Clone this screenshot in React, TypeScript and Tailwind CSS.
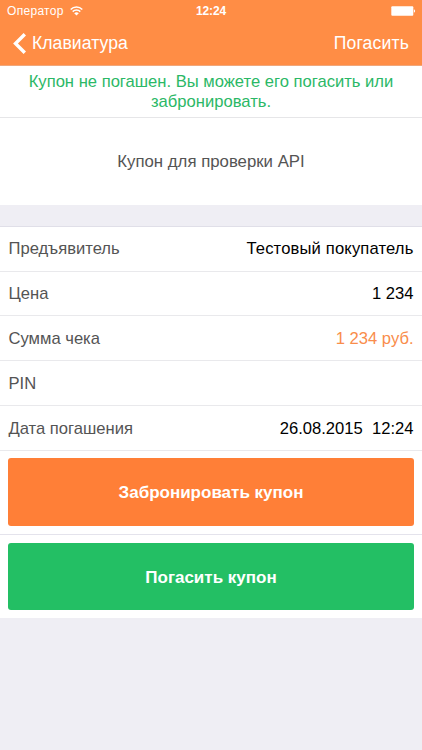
import clsx from "clsx";

type Row = {
  label: string;
  value?: string;
  valueClass?: string;
  rowClass?: string;
};

const ROWS: Row[] = [
  {
    label: "Предъявитель",
    value: "Тестовый покупатель",
    valueClass: "text-black tracking-[0.15px]",
  },
  { label: "Цена", value: "1 234", rowClass: "h-[44px] pt-[2px]" },
  {
    label: "Сумма чека",
    value: "1 234 руб.",
    valueClass: "text-[#f98d4b]",
    rowClass: "h-[45px] pt-[2px]",
  },
  { label: "PIN", rowClass: "h-[45px] pt-[2px]" },
  {
    label: "Дата погашения",
    value: "26.08.2015  12:24",
    rowClass: "h-[45px] pt-[2px]",
  },
];

function WifiIcon() {
  return (
    <svg width="13" height="10" viewBox="0 0 13 10" fill="none" stroke="white">
      <path d="M0.7 3.5a8.2 8.2 0 0 1 11.6 0" strokeWidth="1.5" />
      <path d="M2.7 5.6a5.4 5.4 0 0 1 7.6 0" strokeWidth="1.5" />
      <path d="M6.5 9.6L4.2 7.3a3.3 3.3 0 0 1 4.6 0z" fill="white" stroke="none" />
    </svg>
  );
}

function BatteryIcon() {
  return (
    <svg width="25" height="10" viewBox="0 0 25 10" fill="white">
      <rect x="0.3" y="0.2" width="22" height="9.6" rx="1" />
      <path d="M22.9 3.3a1.8 1.8 0 0 1 0 3.4z" />
    </svg>
  );
}

function Header() {
  return (
    <header className="h-[66px] bg-[#ff8d45] border-b border-[#f0a77b] text-white">
      <div className="grid grid-cols-3 items-center h-[22px] px-[7px] text-[12px] leading-none">
        <div className="flex items-center gap-[6px]">
          <span className="tracking-[0.3px]">Оператор</span>
          <WifiIcon />
        </div>
        <span className="text-center font-bold tracking-[-0.1px]">12:24</span>
        <div className="flex justify-end -mr-px">
          <BatteryIcon />
        </div>
      </div>
      <div className="flex items-center justify-between h-[43px] pl-[13px] pr-[13px] text-[17.6px]">
        <button className="flex items-center gap-[6px]">
          <svg width="13" height="21" viewBox="0 0 13 21" fill="none">
            <path d="M11.8 1.2L2.5 10.5l9.3 9.3" stroke="white" strokeWidth="3.4" />
          </svg>
          <span className="tracking-[0.05px]">Клавиатура</span>
        </button>
        <button className="tracking-[0.15px]">Погасить</button>
      </div>
    </header>
  );
}

function InfoRow({ label, value, valueClass, rowClass }: Row) {
  return (
    <div
      className={clsx(
        "flex items-center justify-between px-[8.5px] border-b border-[#e9e9ec]",
        rowClass ?? "h-[45px]",
      )}
    >
      <span className="text-[#545454]">{label}</span>
      {value && (
        <span className={clsx("whitespace-pre", valueClass ?? "text-black")}>
          {value}
        </span>
      )}
    </div>
  );
}

export default function App() {
  return (
    <div className="w-full h-[750px] overflow-hidden bg-[#efeef4] font-['Liberation_Sans',Arial,sans-serif] text-[16.6px]">
      <Header />
      <div className="flex items-center justify-center h-[52px] bg-white border-b border-[#e6e6e8] text-center leading-[20px] text-[#2bb866]">
        <p>
          Купон не погашен. Вы можете его погасить или
          <br />
          забронировать.
        </p>
      </div>
      <div className="flex items-center justify-center h-[87px] bg-white text-[16.8px] text-[#545454]">
        Купон для проверки API
      </div>
      <div className="h-[22px] border-b border-[#e0dfe8]" />
      <div className="bg-white">
        {ROWS.map((row) => (
          <InfoRow key={row.label} {...row} />
        ))}
        <div className="h-[84px] px-[8.4px] pt-[7.4px] border-b border-[#e4e3ec]">
          <button className="w-full h-[67.5px] pt-[2px] rounded-[3px] bg-[#ff7f37] text-[17px] text-white font-bold">
            Забронировать купон
          </button>
        </div>
        <div className="h-[83px] px-[8.4px] pt-[8px]">
          <button className="w-full h-[67px] pt-[2px] rounded-[3px] bg-[#23bf64] text-[17px] text-white font-bold">
            Погасить купон
          </button>
        </div>
      </div>
    </div>
  );
}
